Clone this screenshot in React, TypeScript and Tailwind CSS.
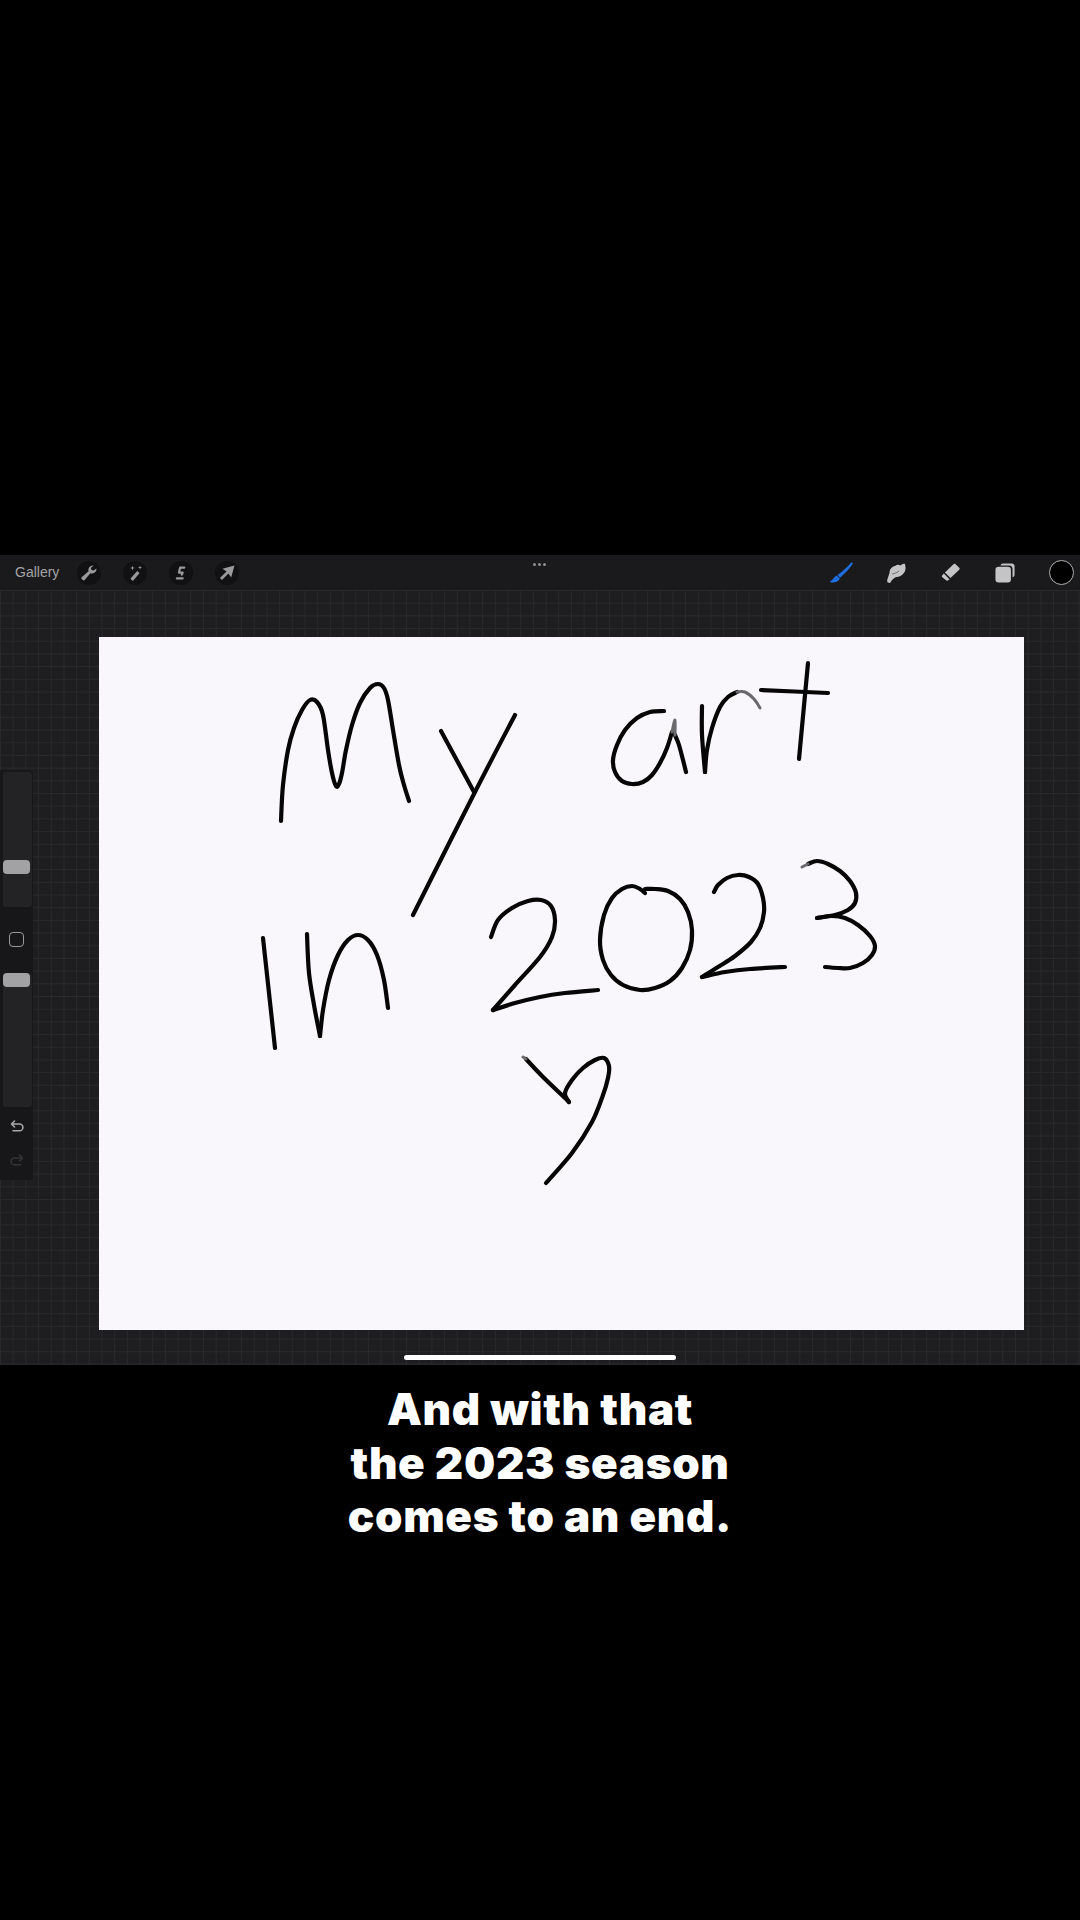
function smooth(p: number[][]) {
  let d = `M${p[0][0]} ${p[0][1]}`;
  for (let i = 0; i < p.length - 1; i++) {
    const a = p[Math.max(i - 1, 0)], b = p[i], c = p[i + 1], e = p[Math.min(i + 2, p.length - 1)];
    d += ` C${(b[0] + (c[0] - a[0]) / 6).toFixed(1)} ${(b[1] + (c[1] - a[1]) / 6).toFixed(1)} ${(c[0] - (e[0] - b[0]) / 6).toFixed(1)} ${(c[1] - (e[1] - b[1]) / 6).toFixed(1)} ${c[0]} ${c[1]}`;
  }
  return d;
}

const strokes: number[][][] = [
  [[281,821],[283,785],[288,750],[294,728],[302,710],[310,700],[317,702],[323,715],[328,750],[332,773],[336,786],[339,784],[342,773],[346,750],[352,725],[360,703],[370,688],[378,684],[384,688],[388,700],[393,730],[399,765],[404,785],[409,801]],
  [[441,731],[474,792]],
  [[515,715],[476,790],[413,915]],
  [[664,711],[650,712],[637,718],[625,730],[617,745],[613,760],[615,772],[622,781],[632,784],[643,782],[652,775],[660,763],[667,748],[672,732]],
  [[675,735],[679,745],[683,760],[686,772]],
  [[702,706],[702,735],[705,772]],
  [[705,772],[707,750],[712,728],[720,707],[728,697],[737,692]],
  [[808,663],[799,759]],
  [[761,690],[828,693]],
  [[263,938],[275,1048]],
  [[307,934],[309,973],[314,1005],[320,1036]],
  [[320,1036],[323,1010],[329,980],[338,955],[348,940],[358,935],[368,940],[377,955],[384,980],[388,1008]],
  [[491,937],[498,920],[512,908],[528,901],[541,900],[551,906],[555,920],[552,937],[540,957],[515,985],[493,1010]],
  [[493,1010],[515,1003],[540,997],[565,993],[598,990]],
  [[645,893],[640,889],[632,886],[622,889],[612,898],[604,915],[600,940],[603,960],[611,975],[623,985],[640,990],[655,988],[670,981],[682,968],[690,950],[692,930],[688,912],[680,899],[668,891],[655,889],[645,889]],
  [[714,892],[718,885],[727,878],[738,875],[749,877],[758,884],[763,898],[764,912],[760,928],[751,942],[735,956],[718,967],[702,977]],
  [[702,977],[725,972],[750,969],[785,967]],
  [[808,864],[817,861],[828,864],[840,871],[850,881],[856,893],[855,903],[848,910],[835,915],[817,918]],
  [[817,918],[832,916],[845,918],[858,925],[870,936],[875,946],[872,955],[863,963],[850,968],[838,968],[825,967]],
  [[526,1059],[543,1077],[565,1098],[569,1102]],
  [[569,1102],[565,1093],[572,1080],[583,1068],[595,1060],[604,1058],[609,1066],[608,1078],[603,1095],[592,1122],[572,1153],[546,1183]],
];

const soft: number[][][] = [
  [[737,692],[745,692],[754,699],[760,708]],
  [[672,732],[675,720],[675,735]],
  [[802,867],[808,864]],
  [[523,1057],[526,1059]],
];

function Round({ children }: { children: React.ReactNode }) {
  return (
    <div className="flex h-6 w-6 items-center justify-center rounded-full bg-[#111113]">
      {children}
    </div>
  );
}

export default function App() {
  return (
    <div className="flex h-[1920px] w-[1080px] flex-col overflow-hidden bg-black font-['Inter',sans-serif]">
      <div className="h-[555px]" />
      <div className="relative flex h-[810px] flex-col bg-[#1d1d20]">
        <div className="relative flex h-[35px] items-center bg-[#1a1a1c] pl-[15px] pr-[6px]">
          <span className="w-[62px] text-[14px] text-[#a3a3a5] font-['Liberation_Sans',sans-serif]">Gallery</span>
          <div className="flex items-center gap-[22px]">
            <Round>
              <svg viewBox="0 0 24 24" className="h-[20px] w-[20px]" fill="#9a9a9c">
                <path d="M21 6.500a5.500 5.500 0 0 1-7.300 5.700L7.500 19.500a2.400 2.400 0 1 1-3.300-3.300l7.200-6.200A5.500 5.500 0 0 1 17.500 3l-3.200 3 .6 2.500 2.500.6L21 6.500z" />
              </svg>
            </Round>
            <Round>
              <svg viewBox="0 0 24 24" className="h-[20px] w-[20px]" fill="#9a9a9c">
                <path d="M14.500 9.500l3 2.500-8 9.500-3-2.500z" />
                <path d="M9 3l.7 2.300L12 6l-2.300.7L9 9l-.7-2.300L6 6l2.300-.7zM18 3l.6 1.900 1.900.6-1.900.6L18 8l-.6-1.900-1.900-.6 1.900-.6z" />
              </svg>
            </Round>
            <Round>
              <svg viewBox="0 0 24 24" className="h-[20px] w-[20px]" fill="none" stroke="#9a9a9c" strokeWidth="2.600" strokeLinecap="round" strokeLinejoin="round">
                <path d="M16 5.500h-5l-1.500 6h4.500l-1 2.500" />
                <path d="M7 18.500h7" />
              </svg>
            </Round>
            <Round>
              <svg viewBox="0 0 24 24" className="h-[20px] w-[20px]" fill="#9a9a9c">
                <path d="M21 3l-4 14.500-3.300-5L6 20.500l-2.500-2.500 8-7.700-5-3.300z" />
              </svg>
            </Round>
          </div>
          <div className="absolute left-[533px] top-[8px] flex gap-[2px]">
            <span className="h-[3px] w-[3px] rounded-full bg-[#8e8e90]" />
            <span className="h-[3px] w-[3px] rounded-full bg-[#8e8e90]" />
            <span className="h-[3px] w-[3px] rounded-full bg-[#8e8e90]" />
          </div>
          <div className="ml-auto flex items-center gap-[34px]">
            <svg viewBox="0 0 23 21" className="h-[21px] w-[23px]">
              <path d="M21.500 .3C17.500 5 12.500 9.500 7.500 13l2.500 2.700C15 11.500 20 6.500 23 1.300z" fill="#1f6ee0" />
              <path d="M6.800 13.500l3 3c-1 2.700-4.500 4.500-8.500 4-1.300-.2-1.500-1-.7-1.500 2.500-1 3-4 6.200-5.500z" fill="#1f6ee0" />
            </svg>
            <svg viewBox="0 0 19 20" className="h-[20px] w-[19px]" fill="#c4c3c5">
              <path d="M1 19.500C0 19 0 17.500.5 16L2.500 10C2.500 6 5 3.500 8 3c2-1.500 4-1.500 5.500-.5C15 1 17 .5 18 1l.5 3c.5 3-1 6-3.500 8-2 1.500-5 2-7 2.500L5 17l-1.500 2.500c-.5.5-1.500.5-2.500 0z" />
              <path d="M5 11c2.500-.3 5-1.300 7-3" fill="none" stroke="#1a1a1c" strokeWidth=".5" />
            </svg>
            <svg viewBox="0 1 24 22" className="h-[19px] w-[21px]" fill="#c4c3c5">
              <path d="M15.500 2.500c.8-.7 1.700-.7 2.400 0l4.200 4c.700.7.7 1.700 0 2.400L12 18.500 5.500 12z" />
              <path d="M4.300 13.200l6.500 6.500-1.500 1.400c-.8.7-1.700.7-2.400 0L2.500 17.500c-.7-.7-.7-1.700 0-2.400z" />
            </svg>
            <svg viewBox="0 0 22 22" className="h-[20px] w-[20px]" fill="#c4c3c5">
              <rect x="0.500" y="4" width="17" height="17.500" rx="3.500" />
              <path d="M6 2.800C6.300 1.400 7.300.6 8.800.6H18.500C20.300.6 21.500 1.800 21.500 3.600V13c0 1.400-.8 2.400-2.200 2.800V6.300c0-2-1.400-3.500-3.500-3.500z" />
            </svg>
            <div className="h-[25px] w-[25px] rounded-full border border-[#b0b0b2] bg-black" />
          </div>
        </div>
        <div className="relative flex-1 bg-[#1e1e21] bg-[linear-gradient(to_right,#29292c_1px,transparent_1px),linear-gradient(to_bottom,#29292c_1px,transparent_1px)] bg-[size:12.700px_12.700px] pl-[99px] pt-[47px]">
          <div className="h-[693px] w-[925px] bg-[#f9f7fb]">
            <svg viewBox="99 637 925 693" className="h-full w-full" fill="none" strokeLinecap="round" strokeLinejoin="round">
              <g stroke="#060606" strokeWidth="4.200">
                {strokes.map((p, i) => <path key={i} d={smooth(p)} />)}
              </g>
              <g stroke="#6a6a6c" strokeWidth="3">
                {soft.map((p, i) => <path key={i} d={smooth(p)} />)}
              </g>
            </svg>
          </div>
          <div className="absolute bottom-[5px] left-[404px] h-[5px] w-[272px] rounded-full bg-white" />
        </div>
        <div className="absolute left-0 top-[215px] flex h-[410px] w-[33px] flex-col items-start rounded-r-[4px] bg-[#171719] pl-[3px] pt-[2px]">
          <div className="flex h-[135px] w-[29px] flex-col rounded-[3px] bg-[#232326] pt-[88px] pr-[2px]">
            <div className="h-[14px] w-[27px] rounded-[4px] bg-[#a2a2a4]" />
          </div>
          <div className="ml-[6px] mt-[25px] h-[15px] w-[15px] rounded-[4px] border border-[#9a9a9c]" />
          <div className="mt-[26px] h-[134px] w-[29px] rounded-[3px] bg-[#232326] pr-[2px]">
            <div className="h-[14px] w-[27px] rounded-[4px] bg-[#a2a2a4]" />
          </div>
          <svg viewBox="0 0 16 16" className="ml-[6px] mt-[12px] h-[16px] w-[16px]" fill="none" stroke="#a8a8aa" strokeWidth="1.600" strokeLinecap="round" strokeLinejoin="round">
            <path d="M5.500 2L2.500 5l3 3M3 5h7.500a3.300 3.300 0 0 1 0 6.800H4" />
          </svg>
          <svg viewBox="0 0 16 16" className="ml-[6px] mt-[18px] h-[16px] w-[16px]" fill="none" stroke="#343437" strokeWidth="1.600" strokeLinecap="round" strokeLinejoin="round">
            <path d="M10.500 2l3 3-3 3M13 5H5.500a3.300 3.300 0 0 0 0 6.800H12" />
          </svg>
        </div>
      </div>
      <div className="pt-[18px] text-center text-[44px] font-black leading-[53.500px] tracking-[0.65px] text-white">
        <p>And with that</p>
        <p>the 2023 season</p>
        <p>comes to an end.</p>
      </div>
    </div>
  );
}
